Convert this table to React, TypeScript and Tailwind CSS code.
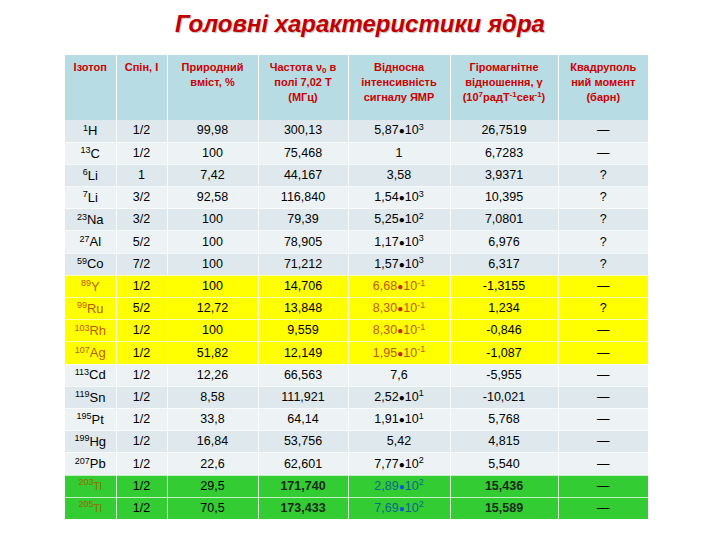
import React from "react";

type Kind = "n" | "y" | "g";
type Row = {
  k: Kind;
  a: string;
  el: string;
  spin: string;
  nat: string;
  freq: string;
  int: { m: string; e?: string };
  gam: string;
  q: string;
};

const rows: Row[] = [
  { k: "n", a: "1", el: "H", spin: "1/2", nat: "99,98", freq: "300,13", int: { m: "5,87", e: "3" }, gam: "26,7519", q: "—" },
  { k: "n", a: "13", el: "C", spin: "1/2", nat: "100", freq: "75,468", int: { m: "1" }, gam: "6,7283", q: "—" },
  { k: "n", a: "6", el: "Li", spin: "1", nat: "7,42", freq: "44,167", int: { m: "3,58" }, gam: "3,9371", q: "?" },
  { k: "n", a: "7", el: "Li", spin: "3/2", nat: "92,58", freq: "116,840", int: { m: "1,54", e: "3" }, gam: "10,395", q: "?" },
  { k: "n", a: "23", el: "Na", spin: "3/2", nat: "100", freq: "79,39", int: { m: "5,25", e: "2" }, gam: "7,0801", q: "?" },
  { k: "n", a: "27", el: "Al", spin: "5/2", nat: "100", freq: "78,905", int: { m: "1,17", e: "3" }, gam: "6,976", q: "?" },
  { k: "n", a: "59", el: "Co", spin: "7/2", nat: "100", freq: "71,212", int: { m: "1,57", e: "3" }, gam: "6,317", q: "?" },
  { k: "y", a: "89", el: "Y", spin: "1/2", nat: "100", freq: "14,706", int: { m: "6,68", e: "-1" }, gam: "-1,3155", q: "—" },
  { k: "y", a: "99", el: "Ru", spin: "5/2", nat: "12,72", freq: "13,848", int: { m: "8,30", e: "-1" }, gam: "1,234", q: "?" },
  { k: "y", a: "103", el: "Rh", spin: "1/2", nat: "100", freq: "9,559", int: { m: "8,30", e: "-1" }, gam: "-0,846", q: "—" },
  { k: "y", a: "107", el: "Ag", spin: "1/2", nat: "51,82", freq: "12,149", int: { m: "1,95", e: "-1" }, gam: "-1,087", q: "—" },
  { k: "n", a: "113", el: "Cd", spin: "1/2", nat: "12,26", freq: "66,563", int: { m: "7,6" }, gam: "-5,955", q: "—" },
  { k: "n", a: "119", el: "Sn", spin: "1/2", nat: "8,58", freq: "111,921", int: { m: "2,52", e: "1" }, gam: "-10,021", q: "—" },
  { k: "n", a: "195", el: "Pt", spin: "1/2", nat: "33,8", freq: "64,14", int: { m: "1,91", e: "1" }, gam: "5,768", q: "—" },
  { k: "n", a: "199", el: "Hg", spin: "1/2", nat: "16,84", freq: "53,756", int: { m: "5,42" }, gam: "4,815", q: "—" },
  { k: "n", a: "207", el: "Pb", spin: "1/2", nat: "22,6", freq: "62,601", int: { m: "7,77", e: "2" }, gam: "5,540", q: "—" },
  { k: "g", a: "203", el: "Tl", spin: "1/2", nat: "29,5", freq: "171,740", int: { m: "2,89", e: "2" }, gam: "15,436", q: "—" },
  { k: "g", a: "205", el: "Tl", spin: "1/2", nat: "70,5", freq: "173,433", int: { m: "7,69", e: "2" }, gam: "15,589", q: "—" },
];

const widths = ["w-[51px]", "w-[51px]", "w-[91px]", "w-[90px]", "w-[102px]", "w-[108px]", "w-[90px]"];

function rowBg(r: Row, i: number) {
  if (r.k === "y") return "bg-[#ffff00]";
  if (r.k === "g") return "bg-[#33cc33]";
  return i % 2 === 0 ? "bg-[#dfe9ed]" : "bg-[#edf3f5]";
}

export default function App() {
  return (
    <div
      className="w-[720px] h-[540px] bg-white overflow-hidden"
      style={{ fontFamily: '"Liberation Sans", Arial, sans-serif' }}
    >
      <div className="h-[55px] pt-[10px] text-center">
        <h1 className="text-[24px] leading-[28px] font-bold italic text-[#c00000] [text-shadow:1px_1px_1px_rgba(0,0,0,0.25)]">
          Головні характеристики ядра
        </h1>
      </div>
      <div className="ml-[65px] w-[583px]">
        <table className="table-fixed border-collapse w-[583px] text-center">
          <thead>
            <tr className="bg-[#b8dce3] h-[65px] align-top text-[11px] leading-[15px] font-bold text-[#cc0000]">
              <th className={`${widths[0]} border-r border-white pt-[5px] font-bold`}>Ізотоп</th>
              <th className={`${widths[1]} border-r border-white pt-[5px] font-bold`}>Спін, І</th>
              <th className={`${widths[2]} border-r border-white pt-[5px] font-bold`}>
                Природний
                <br />
                вміст, %
              </th>
              <th className={`${widths[3]} border-r border-white pt-[5px] font-bold`}>
                Частота ν<sub className="text-[8px]">0</sub> в
                <br />
                полі 7,02 Т
                <br />
                (МГц)
              </th>
              <th className={`${widths[4]} border-r border-white pt-[5px] font-bold`}>
                Відносна
                <br />
                інтенсивність
                <br />
                сигналу ЯМР
              </th>
              <th className={`${widths[5]} border-r border-white pt-[5px] font-bold`}>
                Гіромагнітне
                <br />
                відношення, γ
                <br />
                (10<sup className="text-[8px]">7</sup>радТ<sup className="text-[8px]">-1</sup>сек<sup className="text-[8px]">-1</sup>)
              </th>
              <th className={`${widths[6]} pt-[5px] font-bold`}>
                Квадруполь
                <br />
                ний момент
                <br />
                (барн)
              </th>
            </tr>
          </thead>
          <tbody className="text-[12.5px] text-black">
            {rows.map((r, i) => {
              const isoColor =
                r.k === "y" ? "text-[#c05a00] text-[13px]" : r.k === "g" ? "text-[#9a6a00] text-[10px]" : "text-black text-[13px]";
              const intColor = r.k === "y" ? "text-[#c05a00]" : r.k === "g" ? "text-[#0a6a8a]" : "text-black";
              const dotColor = r.k === "y" ? "text-[#cc2200]" : r.k === "g" ? "text-[#1155dd]" : "text-black";
              const bold = r.k === "g" ? "font-bold text-[#1a2a1a]" : "";
              const cell = "border-r border-white/80 px-0";
              return (
                <tr key={i} className={`${rowBg(r, i)} h-[22.2px] border-b border-white/70`}>
                  <td className={`${cell} ${isoColor}`}>
                    <sup className="text-[9px]">{r.a}</sup>
                    {r.el}
                  </td>
                  <td className={cell}>{r.spin}</td>
                  <td className={cell}>{r.nat}</td>
                  <td className={`${cell} ${bold}`}>{r.freq}</td>
                  <td className={`${cell} ${intColor}`}>
                    {r.int.m}
                    {r.int.e !== undefined && (
                      <>
                        <span className={`${dotColor} text-[10px]`}>●</span>10
                        <sup className="text-[9px]">{r.int.e}</sup>
                      </>
                    )}
                  </td>
                  <td className={`${cell} ${bold}`}>{r.gam}</td>
                  <td className="px-0">{r.q}</td>
                </tr>
              );
            })}
          </tbody>
        </table>
      </div>
    </div>
  );
}
